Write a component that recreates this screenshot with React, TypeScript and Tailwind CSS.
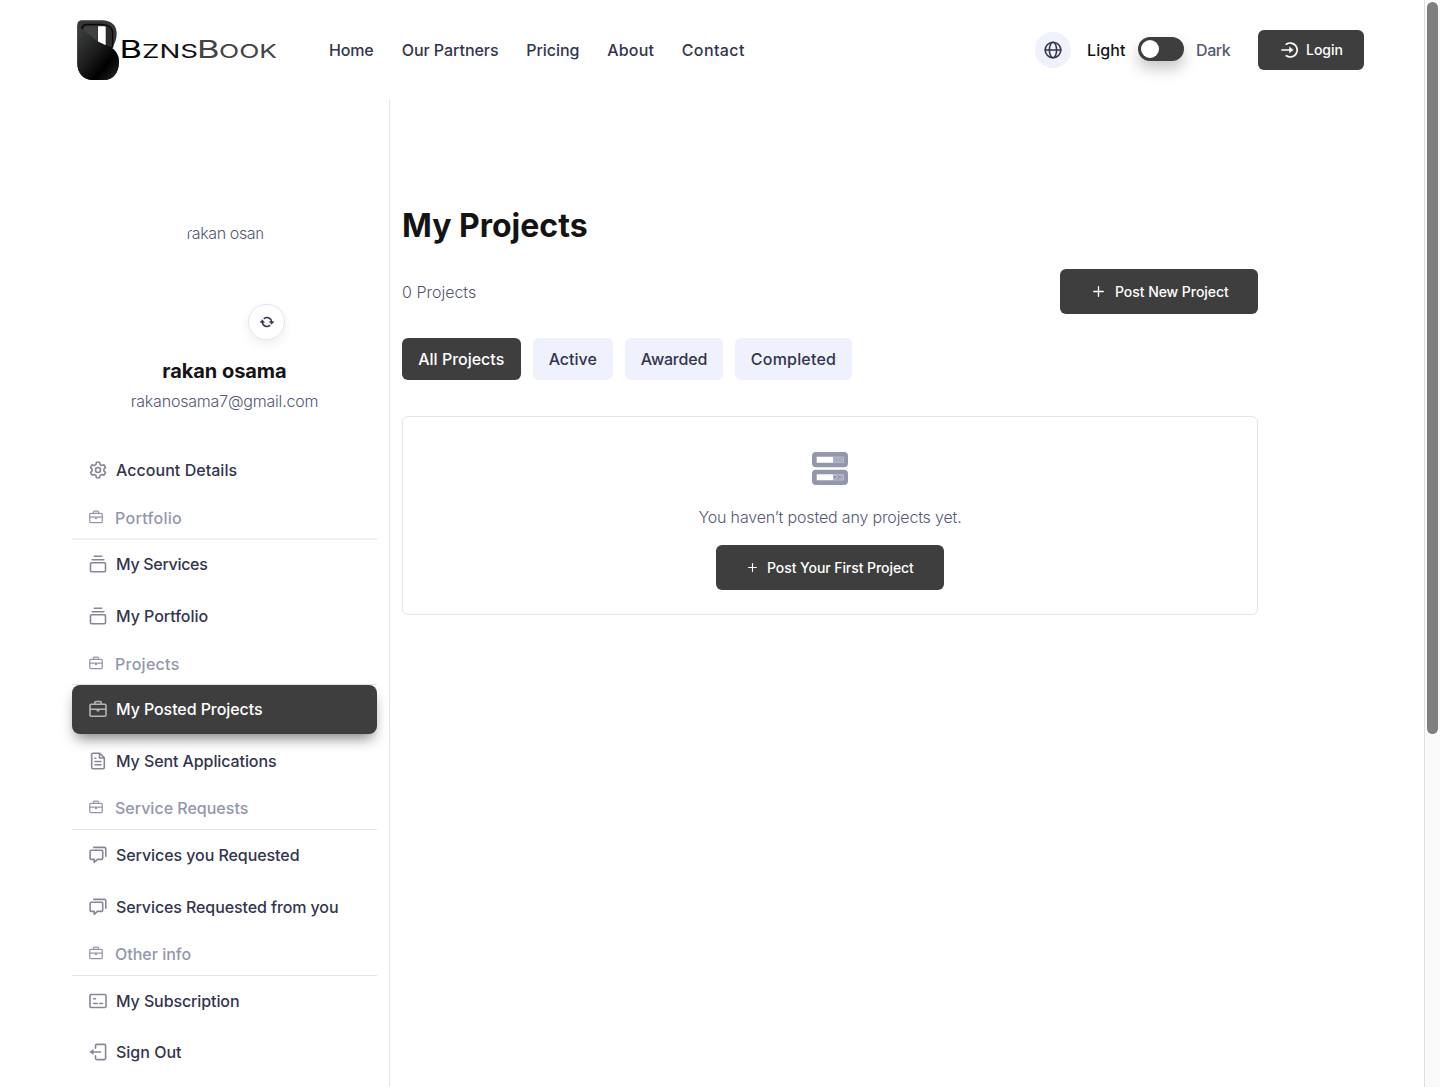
import type { ReactNode } from "react";

type IconProps = { className?: string };

function Svg({ className, children, w = 1.6 }: { className?: string; children: ReactNode; w?: number }) {
  return (
    <svg viewBox="0 0 18 18" className={className} fill="none" stroke="currentColor" strokeWidth={w} strokeLinecap="round" strokeLinejoin="round">
      {children}
    </svg>
  );
}

const Gear = ({ className }: IconProps) => (
  <Svg className={className}>
    <circle cx="9" cy="9" r="2.5" />
    <path d="M7.4 1.3h3.2l.5 2.300 1.600.9 2.300-.7 1.500 2.600-1.600 1.700v1.800l1.600 1.700-1.500 2.600-2.300-.7-1.600.9-.5 2.300H7.4l-.5-2.300-1.600-.9-2.300.7-1.500-2.600 1.600-1.700V8.100L1.500 6.400 3 3.800l2.300.7 1.600-.9z" />
  </Svg>
);
const Briefcase = ({ className }: IconProps) => (
  <Svg className={className}>
    <rect x="1" y="4.300" width="16" height="12" rx="1.300" />
    <path d="M5.800 4V2.700c0-.8.4-1.200 1.200-1.200h4c.8 0 1.200.4 1.200 1.200V4M1.200 9.300h15.600M8.200 10.700h1.600" />
  </Svg>
);
const Collection = ({ className }: IconProps) => (
  <Svg className={className}>
    <rect x="1.500" y="7.800" width="15" height="9" rx="1" />
    <path d="M3.200 4.700h11.600M5.300 1.300h7.400" />
  </Svg>
);
const FileText = ({ className }: IconProps) => (
  <Svg className={className}>
    <path d="M10.700 1.300H4c-.8 0-1.300.5-1.300 1.300v12.800c0 .8.5 1.300 1.300 1.300h10c.8 0 1.300-.5 1.300-1.300V5.800zM10.500 1.500V6h4.600M6 9.500h6M6 12.800h6M6 6.300h.8" />
  </Svg>
);
const Chat = ({ className }: IconProps) => (
  <Svg className={className}>
    <path d="M2.300 4.300h10.200c.7 0 1.200.5 1.200 1.200v6.700c0 .7-.5 1.200-1.200 1.200H8.500l-3.300 2.900v-2.900H2.300c-.7 0-1.200-.5-1.200-1.200V5.500c0-.7.5-1.200 1.200-1.200z" />
    <path d="M4.800 1.400h10.500c.9 0 1.500.6 1.500 1.500v7.300" />
  </Svg>
);
const Card = ({ className }: IconProps) => (
  <Svg className={className}>
    <rect x="1" y="2.500" width="16" height="13" rx="1.300" />
    <path d="M4.700 6.800h1.800M4.700 11.500h3.500M10.700 11.500h2.800" />
  </Svg>
);
const SignOutIcon = ({ className }: IconProps) => (
  <Svg className={className}>
    <path d="M6.500 5.300V2.700c0-.8.5-1.300 1.300-1.300h7.500c.8 0 1.300.5 1.300 1.300v12.600c0 .8-.5 1.300-1.300 1.300H7.800c-.8 0-1.300-.5-1.300-1.300v-2.600M11.500 9H2" />
    <path d="M4.300 6.500v5L1 9z" fill="currentColor" strokeWidth="0.5" />
  </Svg>
);
const LoginIcon = ({ className }: IconProps) => (
  <Svg className={className} w={1.700}>
    <path d="M5.300 3.200A7 7 0 1 1 5.300 14.800M1 9h8" />
    <path d="M8.500 6.300v5.400L12 9z" fill="currentColor" strokeWidth="0.5" />
  </Svg>
);
const Globe = ({ className }: IconProps) => (
  <Svg className={className}>
    <circle cx="9" cy="9" r="7.800" />
    <ellipse cx="9" cy="9" rx="3.600" ry="7.800" />
    <path d="M1.200 9h15.600" />
  </Svg>
);
const Refresh = ({ className }: IconProps) => (
  <Svg className={className} w={2}>
    <path d="M5.500 4.300A6 6 0 0 1 15 9M12.500 13.700A6 6 0 0 1 3 9" />
    <path d="M12 8.500h6L15 11.800zM0 9.500h6L3 6.200z" fill="currentColor" strokeWidth="0.5" />
  </Svg>
);
const Plus = ({ className }: IconProps) => (
  <svg viewBox="0 0 12 12" className={className} fill="none" stroke="currentColor" strokeWidth="1.500" strokeLinecap="round">
    <path d="M6 .8v10.400M.8 6h10.400" />
  </svg>
);
const Server = () => (
  <svg viewBox="0 0 36 33" className="h-[33px] w-9" fill="#9397ad">
    <path fillRule="evenodd" d="M4 0h28a4 4 0 0 1 4 4v7.300a4 4 0 0 1-4 4H4a4 4 0 0 1-4-4V4a4 4 0 0 1 4-4zM4.700 4.700v6h16.500v-6z" />
    <path fillRule="evenodd" d="M4 17.700h28a4 4 0 0 1 4 4V29a4 4 0 0 1-4 4H4a4 4 0 0 1-4-4v-7.300a4 4 0 0 1 4-4zM4.700 22.300v6h16.500v-6z" />
    <g fill="none" stroke="#d3d5e0" strokeWidth="0.6">
      <path d="M21 5h10.500v5.400H21M21.500 5.500l3.300 4.400 3-4.400 3.300 4.400M21.500 9.900l3.300-4.400 3 4.400 3.300-4.400" />
      <path d="M21 22.600h10.500V28H21M22 23.500h3v3.300h-3M27 23.500h3v3.300h-3M25 25h2" />
    </g>
  </svg>
);

function Logo() {
  return (
    <svg viewBox="0 0 202 62" className="h-[62px] w-[202px]" role="img" aria-label="BznsBook">
      <defs>
        <linearGradient id="body" x1="0" y1="0" x2="0.9" y2="1">
          <stop offset="0.1" stopColor="#3a3c3b" />
          <stop offset="0.5" stopColor="#1b1b1b" />
          <stop offset="0.75" stopColor="#000" />
          <stop offset="1" stopColor="#222" />
        </linearGradient>
      </defs>
      <path d="M6 1.300h20c9 0 14.700 5 14.700 13 0 6-1.700 10-4.700 14.500 4.500 3.500 7 7.500 7 14C43 54 37 61 28 61H17C7 61 1.300 54 1.300 44V6c0-3 1.700-4.700 4.700-4.700z" fill="#363837" />
      <path d="M5.700 9.500C6 6.500 8 5.300 11 5.300h15c6.500 0 10.700 3.500 10.700 9V28l-3 1z" fill="#2b2b2b" stroke="#070707" strokeWidth="1.300" />
      <path d="M22 7.200h5c1.500 0 2.700.3 2.700.3V27.500l-7.700-4.500z" fill="#fff" />
      <path d="M21.500 7.200v15.700L7 11c.3-2.500 2-3.800 4.500-3.800z" fill="#404241" />
      <path d="M1.300 5.500c.5 2 2.500 3.500 5 4.800L22 22.500l9 4.300c7.500 3.500 12 8.200 12 16C43 54 37 61 28 61H17C7 61 1.300 54 1.300 44z" fill="url(#body)" />
      <g fontFamily="Inter" fontWeight="400">
        <text x="43.500" y="38.500" fontSize="24" textLength="22.500" lengthAdjust="spacingAndGlyphs" fill="#000">B</text>
        <text x="66" y="38.500" fontSize="19" textLength="56" lengthAdjust="spacingAndGlyphs" fill="#111">ZNS</text>
        <text x="121" y="38.500" fontSize="24" textLength="22.500" lengthAdjust="spacingAndGlyphs" fill="#444">B</text>
        <text x="143" y="38.500" fontSize="19" textLength="58" lengthAdjust="spacingAndGlyphs" fill="#444">OOK</text>
      </g>
    </svg>
  );
}

const nav = [
  { label: "Home", cls: "w-[72.7px] tracking-[-0.15px]" },
  { label: "Our Partners", cls: "w-[124.5px] tracking-[-0.04px]" },
  { label: "Pricing", cls: "w-[81px] -tracking-[0.05px]" },
  { label: "About", cls: "w-[74.5px] tracking-[0.2px]" },
  { label: "Contact", cls: "tracking-[0.4px]" },
];

function Item({ icon: Icon, label, cls, active }: { icon: (p: IconProps) => ReactNode; label: string; cls: string; active?: boolean }) {
  return (
    <a
      className={
        "flex shrink-0 items-center rounded-lg pl-[17px] text-base font-medium whitespace-nowrap " +
        (active ? "relative bg-[#3e3e3e] text-white shadow-[0_8px_14px_-4px_rgba(40,40,40,0.6)] " : "text-[#33354d] ") +
        cls
      }
    >
      <Icon className={active ? "mr-[9px] h-[18px] w-[18px] text-[#b5b5b5]" : "mr-[9px] h-[18px] w-[18px] text-[#858798]"} />
      {label}
    </a>
  );
}

function Section({ label, cls }: { label: string; cls: string }) {
  return (
    <div className={"flex shrink-0 items-center border-[#e2e5f1] pl-[17px] text-base font-medium whitespace-nowrap text-[#9397ad] " + cls}>
      <Briefcase className="mr-3 mb-0.5 h-3.5 w-3.5" />
      {label}
    </div>
  );
}

function Sidebar() {
  return (
    <aside className="flex w-[318px] shrink-0 flex-col border-r border-[#e2e5f1] pr-3">
      <div className="flex h-[344px] shrink-0 flex-col items-center">
        <div className="relative mt-[105px] flex h-[86px] w-[86px] justify-start overflow-hidden rounded-full pt-4 pl-[5px]">
          <span className="text-base font-light tracking-[-0.4px] whitespace-nowrap text-[#565973] [clip-path:ellipse(40px_17px_at_39px_17px)]">rakan osama</span>
        </div>
        <button className="relative mt-[13px] ml-[84px] flex h-9 w-[37px] shrink-0 items-center justify-center rounded-full border border-[#e2e5f1] bg-white text-[#33354d] shadow-[0_4px_10px_rgba(50,50,80,0.08)]">
          <Refresh className="h-3.5 w-3.5" />
        </button>
        <h2 className="mt-4 text-xl leading-[30px] font-bold tracking-[-0.05px] text-[#141414]">rakan osama</h2>
        <p className="mt-px text-base leading-7 font-light tracking-[-0.2px] text-[#565973]">rakanosama7@gmail.com</p>
      </div>
      <Item icon={Gear} label="Account Details" cls="h-[52px] tracking-[0.04px]" />
      <Section label="Portfolio" cls="h-11 border-b-2 border-[#f0eff8] pt-0.5 tracking-[0.3px]" />
      <Item icon={Collection} label="My Services" cls="mb-1 h-12 tracking-[-0.3px]" />
      <Item icon={Collection} label="My Portfolio" cls="h-12 tracking-[-0.04px]" />
      <Section label="Projects" cls="h-[45px] border-b pt-1 tracking-[0.27px]" />
      <Item icon={Briefcase} label="My Posted Projects" active cls="h-[49px] pb-px tracking-[-0.08px]" />
      <Item icon={FileText} label="My Sent Applications" cls="mt-0.5 h-[50px] tracking-[-0.09px]" />
      <Section label="Service Requests" cls="h-11 border-b" />
      <Item icon={Chat} label="Services you Requested" cls="mb-0.5 h-[50px] tracking-[-0.07px]" />
      <Item icon={Chat} label="Services Requested from you" cls="h-[50px] tracking-[-0.1px]" />
      <Section label="Other info" cls="h-11 border-b" />
      <Item icon={Card} label="My Subscription" cls="mb-px h-[50px] tracking-[-0.1px]" />
      <Item icon={SignOutIcon} label="Sign Out" cls="h-[50px]" />
    </aside>
  );
}

export default function App() {
  return (
    <div className="flex h-[1087px] overflow-hidden bg-white font-['Inter',sans-serif]">
      <div className="flex min-w-0 flex-1 flex-col">
        <header className="flex h-[100px] shrink-0 items-center pr-[60px] pl-[76px]">
          <Logo />
          <nav className="ml-[51px] flex text-base font-medium whitespace-nowrap text-[#33354d]">
            {nav.map((n) => (
              <a key={n.label} className={n.cls}>
                {n.label}
              </a>
            ))}
          </nav>
          <div className="ml-auto flex items-center text-base font-medium">
            <button className="flex h-9 w-9 items-center justify-center rounded-full bg-[#eff1fd] text-[#33354d]">
              <Globe className="h-[18px] w-[18px]" />
            </button>
            <span className="ml-4 w-[51px] tracking-[0.1px] text-[#141414]">Light</span>
            <span className="mb-[3px] flex h-6 w-[46px] items-center rounded-full bg-[#3e3e3e] pl-[3px] shadow-[0_8px_14px_rgba(40,40,40,0.25)]">
              <span className="h-[18px] w-[18px] rounded-full bg-white" />
            </span>
            <span className="ml-3 w-[62px] tracking-[-0.4px] text-[#565973]">Dark</span>
            <button className="flex h-10 w-[106px] items-center rounded-md bg-[#3e3e3e] pl-[23px] text-sm font-medium text-white">
              <LoginIcon className="mr-[7px] h-[18px] w-[18px]" />
              Login
            </button>
          </div>
        </header>
        <div className="flex min-h-0 flex-1 pl-[72px]">
          <Sidebar />
          <main className="ml-3 flex w-[856px] flex-col pt-[101px]">
            <h1 className="text-[32px] leading-[50px] font-bold text-[#141414]">My Projects</h1>
            <div className="mt-[18px] flex h-[45px] items-center justify-between">
              <p className="text-base font-light text-[#565973]">0 Projects</p>
              <button className="flex h-[45px] w-[198px] items-center rounded-md bg-[#3e3e3e] pl-[33px] text-sm font-medium tracking-[-0.05px] whitespace-nowrap text-white">
                <Plus className="mr-[11px] h-[11px] w-[11px]" />
                Post New Project
              </button>
            </div>
            <div className="mt-6 flex h-[42px] gap-3 text-base font-medium text-[#33354d]">
              <button className="w-[118.500px] rounded-md bg-[#3e3e3e] text-white">All Projects</button>
              <button className="w-[80.500px] rounded-md bg-[#eff1fd]">Active</button>
              <button className="w-[98px] rounded-md bg-[#eff1fd] tracking-[-0.2px]">Awarded</button>
              <button className="w-[117px] rounded-md bg-[#eff1fd] tracking-[0.2px]">Completed</button>
            </div>
            <section className="mt-9 flex h-[199px] flex-col items-center rounded-md border border-[#e2e5f1] pt-[35px]">
              <Server />
              <p className="mt-5 text-base leading-6 font-light tracking-[-0.16px] text-[#565973]">You haven’t posted any projects yet.</p>
              <button className="mt-4 flex h-[45px] w-[228px] items-center rounded-md bg-[#3e3e3e] pl-8 text-sm font-medium tracking-[-0.07px] whitespace-nowrap text-white">
                <Plus className="mr-[10px] h-[9px] w-[9px]" />
                Post Your First Project
              </button>
            </section>
          </main>
        </div>
      </div>
      <div className="flex w-4 shrink-0 justify-center border-l border-[#dedede] bg-[#fafafa] pt-0.5">
        <div className="h-[732px] w-[11px] rounded-full bg-[#7f7f7f]" />
      </div>
    </div>
  );
}
